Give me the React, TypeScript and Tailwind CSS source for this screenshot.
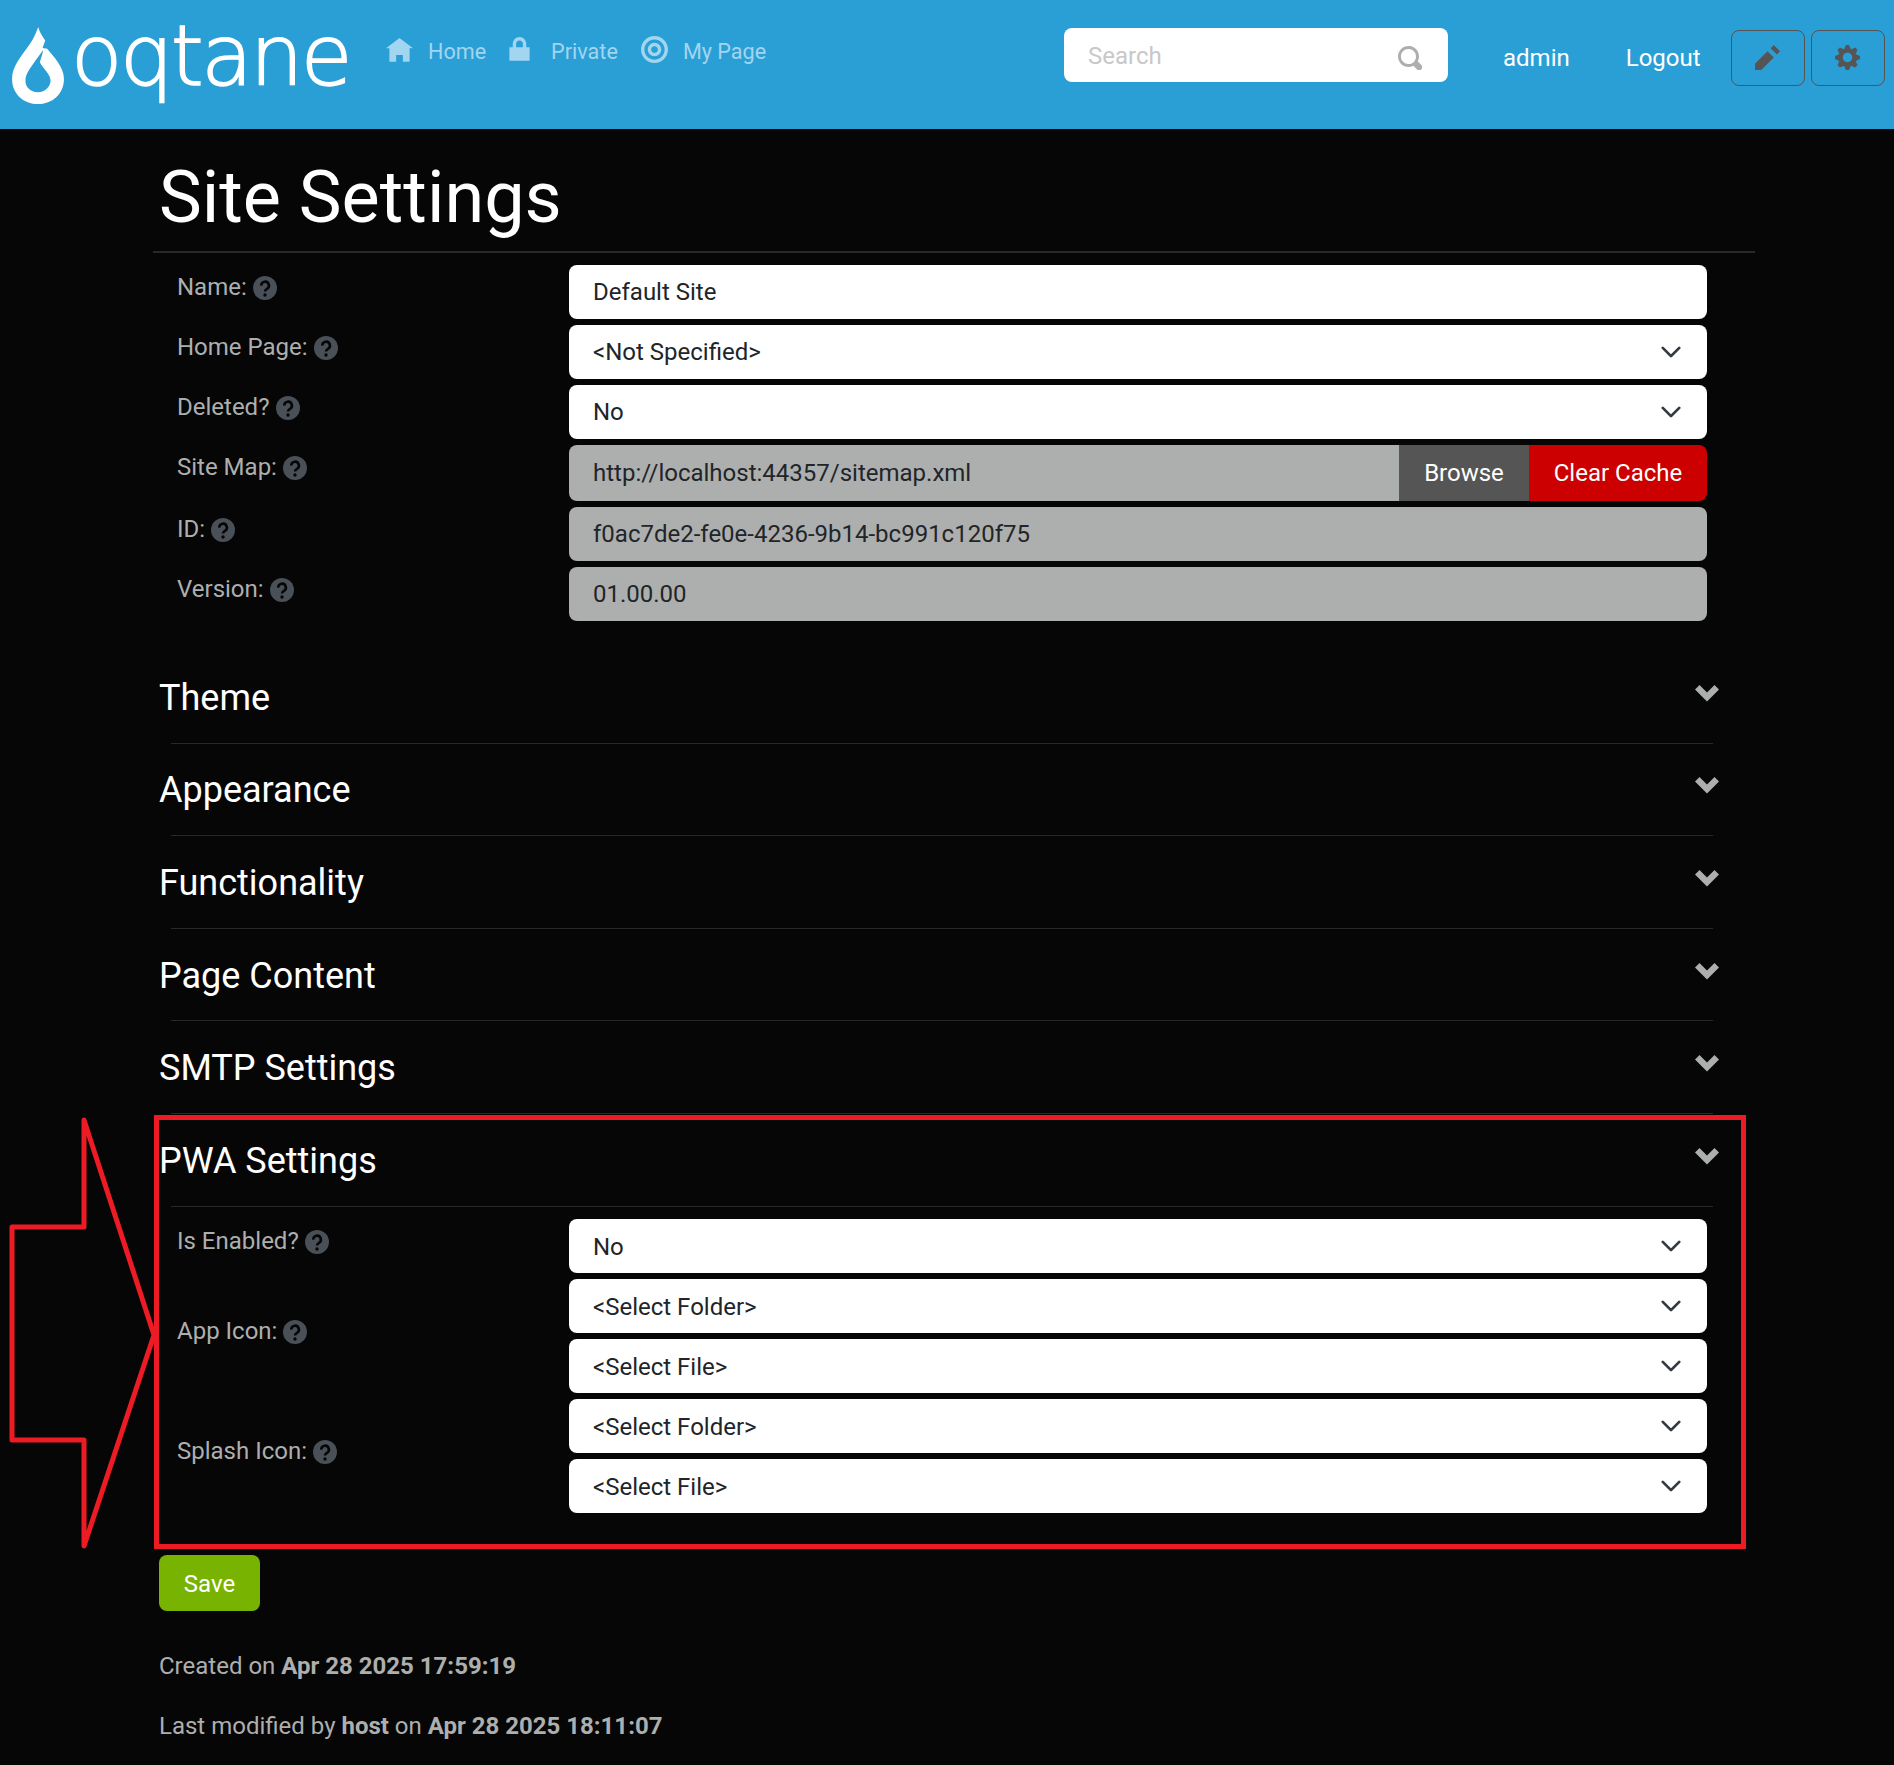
import type { ReactNode } from 'react';

const PATHS = {
  home: 'M4 0l-4 3h1v4h2v-2h2v2h2v-4.03l1 .03-4-3z',
  lock: 'M4 0c-1.1 0-2 .9-2 2v1h-1v4h6v-4h-1v-1c0-1.1-.9-2-2-2zm0 1c.56 0 1 .44 1 1v1h-2v-1c0-.56.44-1 1-1z',
  target:
    'M4 0c-2.2 0-4 1.8-4 4s1.8 4 4 4 4-1.8 4-4-1.8-4-4-4zm0 1c1.66 0 3 1.34 3 3s-1.34 3-3 3-3-1.34-3-3 1.34-3 3-3zm0 1c-1.1 0-2 .9-2 2s.9 2 2 2 2-.9 2-2-.9-2-2-2zm0 1c.56 0 1 .44 1 1s-.44 1-1 1-1-.44-1-1 .44-1 1-1z',
  pencil: 'M6 0l-1 1 2 2 1-1-2-2zm-2 2l-4 4v2h2l4-4-2-2z',
  cog: 'M3.5 0l-.5 1.19c-.1.03-.19.08-.28.13l-1.19-.5-.72.72.5 1.19c-.05.1-.09.18-.13.28l-1.19.5v1l1.19.5c.04.1.08.18.13.28l-.5 1.19.72.72 1.19-.5c.09.04.18.09.28.13l.5 1.19h1l.5-1.19c.09-.04.19-.08.28-.13l1.19.5.72-.72-.5-1.19c.04-.09.09-.19.13-.28l1.19-.5v-1l-1.19-.5c-.03-.09-.08-.19-.13-.28l.5-1.19-.72-.72-1.19.5c-.09-.04-.19-.09-.28-.13l-.5-1.19h-1zm.5 2.5c.83 0 1.5.67 1.5 1.5s-.67 1.5-1.5 1.5-1.5-.67-1.5-1.5.67-1.5 1.5-1.5z',
  search:
    'M3.5 0c-1.93 0-3.5 1.57-3.5 3.5s1.57 3.5 3.5 3.5c.59 0 1.17-.14 1.66-.41a1 1 0 0 0 .13.13l1 1a1.02 1.02 0 1 0 1.44-1.44l-1-1a1 1 0 0 0-.16-.13c.27-.49.44-1.06.44-1.66 0-1.93-1.57-3.5-3.5-3.5zm0 1c1.39 0 2.5 1.11 2.5 2.5 0 .66-.24 1.27-.66 1.72-.01.01-.02.02-.03.03a1 1 0 0 0-.13.13c-.44.4-1.04.63-1.69.63-1.39 0-2.5-1.11-2.5-2.5s1.11-2.5 2.5-2.5z',
  chevron: 'M1.5 1l-1.5 1.5 4 4 4-4-1.5-1.5-2.5 2.5-2.5-2.5z',
};

function Icon({ path, className }: { path: string; className: string }) {
  return (
    <svg viewBox="0 0 8 8" fill="currentColor" className={className} aria-hidden>
      <path fillRule="evenodd" d={path} />
    </svg>
  );
}

function Logo() {
  return (
    <div className="flex items-start">
      <svg viewBox="35 35 155 230" className="mt-[27px] ml-[12px] h-[77px] w-[52px] shrink-0" fill="white" aria-hidden>
        <path
          fillRule="evenodd"
          d="M113 35C118 52 126 64 134 75L126 98L140 100C160 125 190 155 190 190C190 235 155 265 112 265C70 265 35 235 35 190C35 150 65 120 85 90C100 70 108 50 113 35ZM128 104L105 135C88 160 75 175 75 195C75 215 90 230 112 230C135 230 150 212 150 195C150 175 128 160 118 140C122 128 126 116 128 104Z"
        />
      </svg>
      <span className="ml-[7px] mt-[4px] font-['DejaVu_Sans'] text-[84px] leading-[104px] font-extralight tracking-[-2.5px] text-white [-webkit-text-stroke:1.5px_white]">
        oqtane
      </span>
    </div>
  );
}

function NavLink({ path, label, icon, gap }: { path: string; label: string; icon: string; gap: string }) {
  return (
    <div className={`flex items-center ${gap} text-[#a2d5ef]`}>
      <Icon path={path} className={icon} />
      <span>{label}</span>
    </div>
  );
}

function Header() {
  return (
    <header className="flex h-[129px] bg-[#2a9fd6]">
      <div className="w-[386px] shrink-0">
        <Logo />
      </div>
      <nav className="flex h-[104px] w-[678px] shrink-0 items-center gap-[20px] text-[21.6px]">
        <NavLink path={PATHS.home} label="Home" icon="mb-[2px] h-[27px] w-[27px]" gap="gap-[15px]" />
        <NavLink path={PATHS.lock} label="Private" icon="mb-[3px] h-[27px] w-[27px]" gap="gap-[18px]" />
        <NavLink path={PATHS.target} label="My Page" icon="mb-[6px] ml-[3px] h-[27px] w-[27px]" gap="gap-[15px]" />
      </nav>
      <div className="mt-[28px] flex h-[54px] w-[384px] items-center justify-between rounded-[8px] bg-white pt-[1px] pr-[26px] pl-[24px] text-[24px] text-[#c8c8c8]">
        <span>Search</span>
        <Icon path={PATHS.search} className="mt-[5px] h-[24px] w-[24px] text-[#adafae]" />
      </div>
      <div className="ml-[55px] mt-[30px] flex h-[56px] items-center text-[24px] text-white">
        <span>admin</span>
        <span className="ml-[56px]">Logout</span>
      </div>
      <div className="ml-[30px] mt-[30px] flex gap-[6px] text-[#555555]">
        <div className="flex h-[56px] w-[74px] items-center justify-center rounded-[8px] border border-[#555555]">
          <Icon path={PATHS.pencil} className="mb-[2px] h-[25px] w-[25px]" />
        </div>
        <div className="flex h-[56px] w-[74px] items-center justify-center rounded-[8px] border border-[#555555]">
          <Icon path={PATHS.cog} className="mb-[2px] h-[25px] w-[25px]" />
        </div>
      </div>
    </header>
  );
}

function HelpIcon() {
  return (
    <svg viewBox="0 0 24 24" className="mt-[2px] h-[24px] w-[24px]" aria-hidden>
      <circle cx="12" cy="12" r="12" fill="#495057" />
      <path
        d="M8.3 9.6a3.8 3.8 0 1 1 5.7 3.2c-1.2.7-2 1.2-2 2.6"
        fill="none"
        stroke="#060606"
        strokeWidth="2.6"
      />
      <circle cx="12" cy="19" r="1.7" fill="#060606" />
    </svg>
  );
}

function Label({ text }: { text: string }) {
  return (
    <div className="flex items-center gap-[6px]">
      <span>{text}</span>
      <HelpIcon />
    </div>
  );
}

function Field({ children, muted, low }: { children: ReactNode; muted?: boolean; low?: boolean }) {
  return (
    <div
      className={`flex h-[54px] items-center rounded-[8px] px-[24px] text-[#212529] ${
        muted ? 'bg-[#adafae]' : 'bg-white'
      } ${low ? 'pt-[2px]' : ''}`}
    >
      {children}
    </div>
  );
}

function Select({ value, low }: { value: string; low?: boolean }) {
  return (
    <Field low={low}>
      <span className="flex-1">{value}</span>
      <svg viewBox="0 0 16 16" className={`mr-[1px] h-[22px] w-[22px] ${low ? '-mt-[2px]' : ''}`} fill="none" stroke="#343a40" strokeWidth="2" strokeLinecap="round" strokeLinejoin="round" aria-hidden>
        <path d="m2 5 6 6 6-6" />
      </svg>
    </Field>
  );
}

function Row({ label, children }: { label: string; children: ReactNode }) {
  return (
    <div className="grid grid-cols-[392px_1138px] pl-[18px]">
      <div className="pt-[5px]">
        <Label text={label} />
      </div>
      {children}
    </div>
  );
}

function Section({ title }: { title: string }) {
  return (
    <div className="h-[92.6px] w-[1560px]">
      <div className="flex h-[91.6px] items-center justify-between">
        <h2 className="pt-[2px] text-[36px] text-white">{title}</h2>
        <Icon path={PATHS.chevron} className="mb-[6px] h-[24px] w-[24px] text-[#adafae]" />
      </div>
      <div className="mr-[6px] ml-[12px] h-px bg-[#282828]" />
    </div>
  );
}

function Callout() {
  return (
    <>
      <div className="pointer-events-none absolute top-[1115px] left-[154px] h-[434px] w-[1592px] border-[5px] border-[#ed1c24]" />
      <svg className="pointer-events-none absolute top-[1115px] left-[8px] h-[436px] w-[150px]" viewBox="0 0 150 436" aria-hidden>
        <path
          d="M76 5L146 220L76 431V325H4V112H76Z"
          fill="none"
          stroke="#ed1c24"
          strokeWidth="5"
          strokeLinejoin="round"
        />
      </svg>
    </>
  );
}

export default function App() {
  return (
    <div className="relative h-[1765px] bg-[#060606] font-['Roboto'] text-[24px] leading-[34px] text-[#adafae]">
      <Header />
      <main className="pl-[159px]">
        <div className="-ml-[6px] mr-[139px] flex h-[124px] items-center border-b-2 border-[#282828] pt-[15px] pl-[6px]">
          <h1 className="text-[72px] leading-[86px] text-white">Site Settings</h1>
        </div>
        <div className="mt-[12px] flex flex-col gap-[6px]">
          <Row label="Name:">
            <Field>Default Site</Field>
          </Row>
          <Row label="Home Page:">
            <Select value="<Not Specified>" />
          </Row>
          <Row label="Deleted?">
            <Select value="No" />
          </Row>
          <Row label="Site Map:">
            <div className="flex h-[56px] overflow-hidden rounded-[8px] text-white">
              <div className="flex flex-1 items-center bg-[#adafae] px-[24px] text-[#212529]">
                http://localhost:44357/sitemap.xml
              </div>
              <div className="flex w-[130px] items-center justify-center bg-[#555555]">Browse</div>
              <div className="flex w-[178px] items-center justify-center bg-[#cc0000]">Clear Cache</div>
            </div>
          </Row>
          <Row label="ID:">
            <Field muted>f0ac7de2-fe0e-4236-9b14-bc991c120f75</Field>
          </Row>
          <Row label="Version:">
            <Field muted>01.00.00</Field>
          </Row>
        </div>

        <div className="mt-[30px]">
          <Section title="Theme" />
          <Section title="Appearance" />
          <Section title="Functionality" />
          <Section title="Page Content" />
          <Section title="SMTP Settings" />
          <Section title="PWA Settings" />
        </div>

        <div className="mt-[12.4px] grid grid-cols-[392px_1138px] pl-[18px]">
          <div className="pt-[5px]">
            <Label text="Is Enabled?" />
          </div>
          <Select value="No" low />
        </div>
        <div className="mt-[6px] grid grid-cols-[392px_1138px] pl-[18px]">
          <div className="flex items-center pb-[10px]">
            <Label text="App Icon:" />
          </div>
          <div className="flex flex-col gap-[6px]">
            <Select value="<Select Folder>" low />
            <Select value="<Select File>" low />
          </div>
        </div>
        <div className="mt-[6px] grid grid-cols-[392px_1138px] pl-[18px]">
          <div className="flex items-center pb-[10px]">
            <Label text="Splash Icon:" />
          </div>
          <div className="flex flex-col gap-[6px]">
            <Select value="<Select Folder>" low />
            <Select value="<Select File>" low />
          </div>
        </div>

        <div className="mt-[42px] flex h-[56px] w-[101px] items-center justify-center rounded-[8px] bg-[#77b300] pt-[2px] text-white">
          Save
        </div>
        <p className="mt-[38px]">
          Created on <b>Apr 28 2025 17:59:19</b>
        </p>
        <p className="mt-[26px]">
          Last modified by <b>host</b> on <b>Apr 28 2025 18:11:07</b>
        </p>
      </main>
      <Callout />
    </div>
  );
}
